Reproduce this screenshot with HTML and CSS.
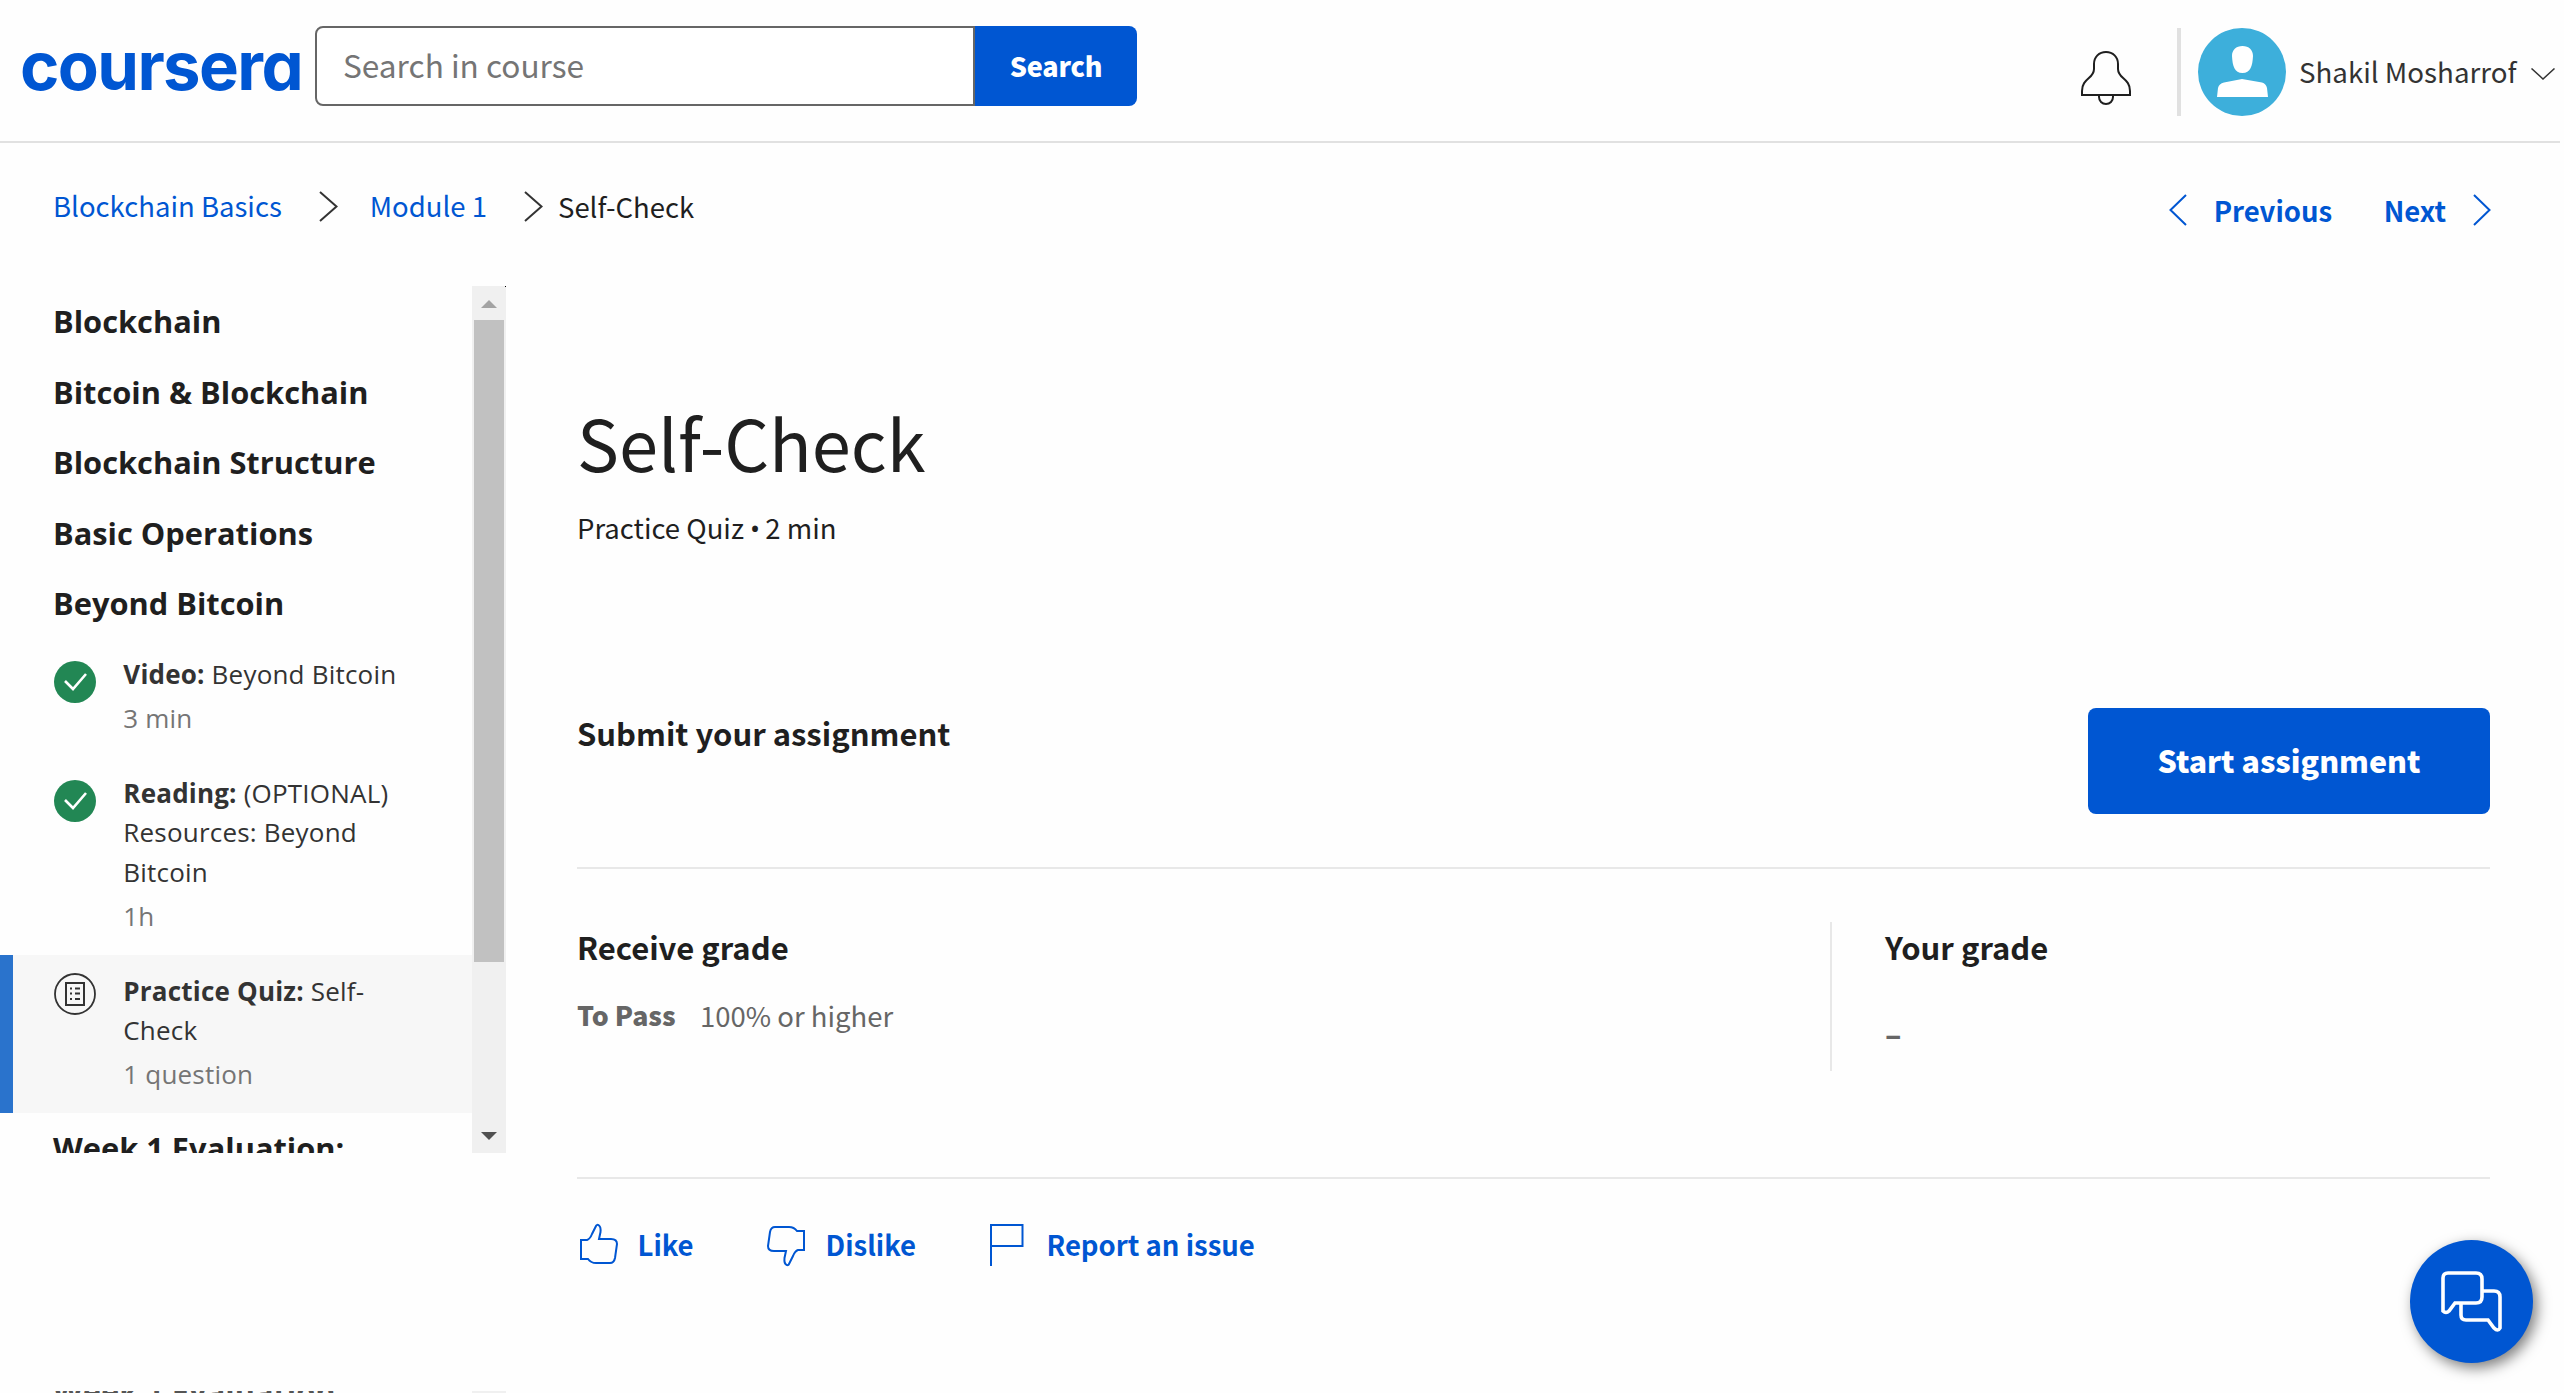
FILE: index.html
```html
<!DOCTYPE html>
<html lang="en">
<head>
<meta charset="utf-8">
<title>Self-Check | Coursera</title>
<link rel="stylesheet" href="styles.css">
</head>
<body>
<header class="header">
  <a class="logo">coursera</a>
  <form class="search">
    <div class="search-field">Search in course</div>
    <div class="search-button">Search</div>
  </form>
  <div class="account">
    <svg class="bell" width="50" height="54" viewBox="0 0 50 54" fill="none" stroke="#1f1f1f" stroke-width="2"><path d="M1 44H49V40C49 27 37 28 37 18V13C37 6 32 1 25 1S13 6 13 13V18C13 28 1 27 1 40ZM18 44V46C18 50 21 53 25 53S32 50 32 46V44"/></svg>
    <span class="divider"></span>
    <svg class="avatar" width="88" height="88" viewBox="0 0 88 88"><circle cx="44" cy="44" r="44" fill="#3dafdb"/><path fill="#fff" d="M44.500 18C51 18 55 22 55 28C54.500 38 52.500 45 44.500 45S34.500 38 34 28C34 22 38 18 44.500 18ZM19 69L20 60Q21 55.500 26 54.500L44 51L64 54.500Q68 55.500 69 60L70 69Z"/></svg>
    <span class="user">Shakil Mosharrof</span>
    <svg class="caret" width="24" height="12" viewBox="0 0 24 12" fill="none" stroke="#333" stroke-width="1.500"><path d="M.5.5L12 11L23.500.5"/></svg>
  </div>
</header>

<div class="toolbar">
  <nav class="crumbs">
    <a class="crumb-link">Blockchain Basics</a>
    <svg class="crumb-sep" width="19" height="31" viewBox="0 0 19 31" fill="none" stroke="#333" stroke-width="2"><path d="M1 1L17.500 15.500L1 30"/></svg>
    <a class="crumb-link">Module 1</a>
    <svg class="crumb-sep crumb-sep-last" width="19" height="31" viewBox="0 0 19 31" fill="none" stroke="#333" stroke-width="2"><path d="M1 1L17.500 15.500L1 30"/></svg>
    <span class="crumb-current">Self-Check</span>
  </nav>
  <nav class="pager">
    <svg width="18" height="32" viewBox="0 0 18 32" fill="none" stroke="#0056d2" stroke-width="2"><path d="M17 1L1.500 16L17 31"/></svg>
    <a class="previous">Previous</a>
    <a class="next">Next</a>
    <svg width="18" height="32" viewBox="0 0 18 32" fill="none" stroke="#0056d2" stroke-width="2"><path d="M1 1L16.500 16L1 31"/></svg>
  </nav>
</div>

<div class="columns">
  <aside class="sidebar">
    <div class="lessons">
      <h2 class="lesson">Blockchain</h2>
      <h2 class="lesson">Bitcoin &amp; Blockchain</h2>
      <h2 class="lesson">Blockchain Structure</h2>
      <h2 class="lesson">Basic Operations</h2>
      <h2 class="lesson">Beyond Bitcoin</h2>
      <div class="items">
        <div class="item">
          <svg class="item-icon" width="42" height="42" viewBox="0 0 42 42"><circle cx="21" cy="21" r="21" fill="#228754"/><path d="M11 20L19 28L32 13" fill="none" stroke="#fff" stroke-width="2.600"/></svg>
          <div class="item-text"><p class="item-name"><b>Video:</b> Beyond Bitcoin</p><p class="item-meta">3 min</p></div>
        </div>
        <div class="item">
          <svg class="item-icon" width="42" height="42" viewBox="0 0 42 42"><circle cx="21" cy="21" r="21" fill="#228754"/><path d="M11 20L19 28L32 13" fill="none" stroke="#fff" stroke-width="2.600"/></svg>
          <div class="item-text"><p class="item-name"><b>Reading:</b> (OPTIONAL) Resources: Beyond Bitcoin</p><p class="item-meta">1h</p></div>
        </div>
        <div class="item item-active">
          <svg class="item-icon" width="42" height="42" viewBox="0 0 42 42" fill="none" stroke="#333"><circle cx="21" cy="21" r="20" stroke-width="1.800"/><path d="M12 10H30V32H12Z" stroke-width="2"/><path d="M16 15.500h2M16 20.500h2M16 26h2M21 15.500h5M21 20.500h5M21 26h5" stroke-width="2"/></svg>
          <div class="item-text"><p class="item-name"><b>Practice Quiz:</b> Self-<br>Check</p><p class="item-meta">1 question</p></div>
        </div>
      </div>
      <h2 class="lesson">Week 1 Evaluation:</h2>
    </div>
    <div class="scrollbar">
      <svg width="16" height="8" viewBox="0 0 16 8"><path d="M0 8L8 0L16 8Z" fill="#a3a3a3"/></svg>
      <div class="thumb"></div>
      <svg width="16" height="8" viewBox="0 0 16 8"><path d="M0 0L8 8L16 0Z" fill="#505050"/></svg>
    </div>
  </aside>

  <main class="main">
    <h1 class="title">Self-Check</h1>
    <p class="subtitle">Practice Quiz <span class="dot">•</span> 2 min</p>
    <section class="submit">
      <h3 class="heading">Submit your assignment</h3>
      <a class="start">Start assignment</a>
    </section>
    <section class="grades">
      <div class="receive">
        <h3 class="heading">Receive grade</h3>
        <p class="pass"><b class="pass-label">To Pass</b><span class="pass-value">100% or higher</span></p>
      </div>
      <div class="yours">
        <h3 class="heading">Your grade</h3>
        <p class="grade">–</p>
      </div>
    </section>
    <div class="feedback">
      <svg class="thumb-up" width="40" height="42" viewBox="0 0 40 42" fill="none" stroke="#0056d2" stroke-width="2"><path d="M2 17H8Q11 16 13 11L17 3Q18 1 20 2.500Q22 4 21.500 9L20 16H32Q38 16 38 21L36 35Q35 40 31 40H17Q12 40 9 36H2Z"/></svg>
      <span class="like">Like</span>
      <svg class="thumb-down" width="40" height="42" viewBox="0 0 40 42" fill="none" stroke="#0056d2" stroke-width="2"><path d="M38 25H32Q29 26 27 31L23 39Q22 41 20 39.500Q18 38 18.500 33L20 26H8Q2 26 2 21L4 7Q5 2 9 2H23Q28 2 31 6H38Z"/></svg>
      <span class="dislike">Dislike</span>
      <svg class="flag" width="34" height="42" viewBox="0 0 34 42" fill="none" stroke="#0056d2" stroke-width="2"><path d="M1 42V1H32.500V22H1"/></svg>
      <span class="report">Report an issue</span>
    </div>
  </main>
</div>
<div class="repeat"><span class="repeat-text">Week 1 Evaluation:</span><span class="repeat-track"></span></div>

<div class="chat">
  <svg width="64" height="64" viewBox="0 0 64 64" fill="none" stroke="#fff" stroke-width="3.600"><path d="M8 3H36Q42 3 42 9V27Q42 33 36 33H15L9 41Q6 44 3 41V8Q3 3 8 3ZM42 21H54Q60 21 60 27V58Q58 62 54 58L48 50H26Q21 50 21 45V33"/></svg>
</div>
</body>
</html>
```
FILE: styles.css
```css
* { box-sizing: border-box; margin: 0; padding: 0; }
html { overflow: hidden; }
body {
  width: 2564px; height: 1393px; overflow: hidden; position: relative;
  background: #fefefe; color: #1f1f1f;
  font: 27.500px/40px "Noto Sans CJK SC", sans-serif;
}
svg { display: block; flex: none; }

.header { width: 2560px; height: 143px; padding-left: 20px; display: flex; align-items: flex-start; border-bottom: 2px solid #e1e1e1; }
.logo { width: 295px; margin-top: 26px; font: 700 67px/80px Inter, sans-serif; font-feature-settings: "cv11"; letter-spacing: -1.600px; color: #0056d2; white-space: nowrap; }
.search { display: flex; width: 822px; height: 80px; margin-top: 26px; font-size: 31.600px; }
.search-field { width: 660px; padding-left: 26px; line-height: 73px; border: 2px solid #666; border-radius: 8px 0 0 8px; background: #fff; color: #757575; }
.search-button { flex: 1; text-align: center; background: #0056d2; color: #fff; border-radius: 0 8px 8px 0; font-size: 27px; font-weight: 900; letter-spacing: -.25px; line-height: 80px; }
.account { margin-left: auto; padding: 28px 5px 0 0; display: flex; height: 116px; align-items: center; }
.bell { margin: 11px 46px 0 0; }
.divider { width: 4px; height: 88px; background: #e1e1e1; margin-right: 17px; }
.user { width: 218px; margin: -3px 14px 0 13px; font-size: 27.700px; color: #333; white-space: nowrap; }
.caret { margin-top: 3px; }

.toolbar { height: 143px; padding: 42px 73px 0 53px; display: flex; justify-content: space-between; align-items: flex-start; }
.crumbs, .pager { display: flex; white-space: nowrap; }
.crumb-link { color: #0056d2; }
.crumb-sep { margin: 6px 32px 0 37px; }
.crumb-sep-last { margin-right: 15px; }
.crumb-current { margin-top: 1px; }
.pager { margin-top: 5px; color: #0056d2; font-weight: 700; align-items: center; }
.previous { margin: 0 51.500px 0 27px; }
.next { margin: 0 27px 0 0; }

.columns { display: flex; height: 1105px; align-items: flex-start; }
.sidebar { width: 506px; height: 867px; overflow: hidden; display: flex; position: relative; font-family: "Open Sans", sans-serif; }
.sidebar::after { content: ""; position: absolute; right: 0; top: 0; width: 1px; height: 1px; background: #000; }
.lessons { width: 472px; padding-top: 15px; }
.lesson { height: 40px; margin: 0 0 30.500px 53px; font-size: 30.800px; font-weight: 700; line-height: 40px; white-space: nowrap; }
.items { margin: -15.500px 0 15px; }
.item { display: flex; padding: 17px 40px 18.300px 54px; font-size: 26px; letter-spacing: .2px; line-height: 39.600px; color: #333; }
.item-icon { margin: 6px 27.300px 0 0; }
.item-active { background: #f7f7f7; border-left: 13px solid #2a73cc; padding-left: 41px; }
.item-active .item-icon { margin-top: 1px; }
.item-meta { margin-top: 4.300px; color: #757575; }
.scrollbar { width: 34px; height: 867px; padding: 14px 0 13px; display: flex; flex-direction: column; align-items: center; background: #f0f0f0; }
.thumb { width: 30px; height: 642px; margin: 12px 0 170px; background: #c1c1c1; }

.main { width: 1913px; margin-left: 71px; padding-top: 105px; }
.title { font-size: 70.400px; font-weight: 400; line-height: 100px; }
.subtitle { height: 40px; margin-top: 16px; }
.dot { font-family: "Open Sans", sans-serif; font-size: 28px; line-height: 1; margin: 0 -1px 0 -.5px; }
.heading { padding-top: 3px; font-size: 31px; font-weight: 700; line-height: 44px; }
.submit { display: flex; justify-content: space-between; margin-top: 161px; height: 161px; border-bottom: 2px solid #e8e8e8; }
.start { width: 402px; height: 106px; border-radius: 8px; background: #0056d2; color: #fff; font-size: 30.300px; font-weight: 900; line-height: 104px; text-align: center; }
.grades { display: flex; height: 310px; padding: 53px 0 106px; border-bottom: 2px solid #e8e8e8; }
.receive { width: 1253px; }
.pass { display: flex; margin-top: 26px; color: #666; }
.pass-label { width: 123px; font-size: 26.700px; font-weight: 900; }
.yours { flex: 1; padding-left: 53px; border-left: 2px solid #e8e8e8; }
.grade { margin-top: 44px; color: #666; font-size: 30px; font-weight: 900; }
.feedback { display: flex; padding-top: 45px; color: #0056d2; font-weight: 700; white-space: nowrap; }
.thumb-up { margin: -1px 18.500px 0 2px; }
.thumb-down { margin: 1px 19.500px 0 72.500px; }
.flag { margin: 0 22.500px 0 74px; }

.repeat { height: 2px; overflow: hidden; display: flex; width: 506px; }
.repeat-text { width: 419px; margin: -20px 0 0 53px; font: 700 30.800px/40px "Open Sans", sans-serif; color: #555; }
.repeat-track { width: 34px; background: #f0f0f0; }

.chat { position: absolute; left: 2410px; top: 1240px; width: 123px; height: 123px; padding: 30px; border-radius: 50%; background: #0056d2; box-shadow: 4px 5px 14px rgba(0,0,0,.5); }
```
